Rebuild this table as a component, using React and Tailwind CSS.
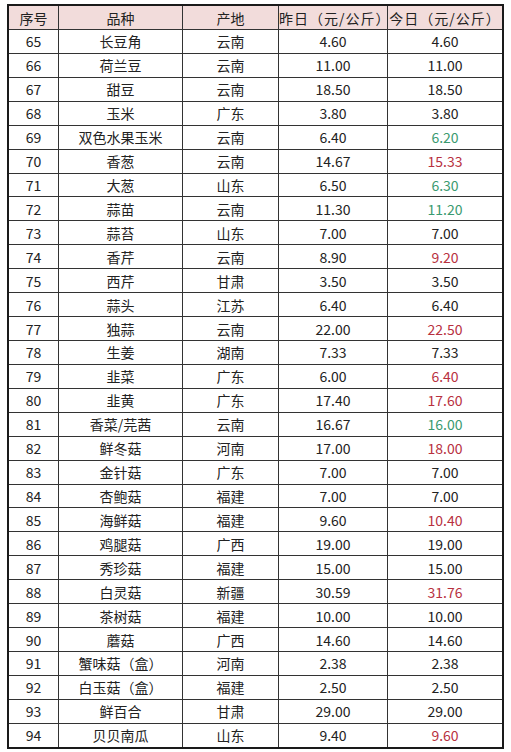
import React from "react";

const rows = [
  [65, "长豆角", "云南", "4.60", "4.60", ""],
  [66, "荷兰豆", "云南", "11.00", "11.00", ""],
  [67, "甜豆", "云南", "18.50", "18.50", ""],
  [68, "玉米", "广东", "3.80", "3.80", ""],
  [69, "双色水果玉米", "云南", "6.40", "6.20", "g"],
  [70, "香葱", "云南", "14.67", "15.33", "r"],
  [71, "大葱", "山东", "6.50", "6.30", "g"],
  [72, "蒜苗", "云南", "11.30", "11.20", "g"],
  [73, "蒜苔", "山东", "7.00", "7.00", ""],
  [74, "香芹", "云南", "8.90", "9.20", "r"],
  [75, "西芹", "甘肃", "3.50", "3.50", ""],
  [76, "蒜头", "江苏", "6.40", "6.40", ""],
  [77, "独蒜", "云南", "22.00", "22.50", "r"],
  [78, "生姜", "湖南", "7.33", "7.33", ""],
  [79, "韭菜", "广东", "6.00", "6.40", "r"],
  [80, "韭黄", "广东", "17.40", "17.60", "r"],
  [81, "香菜/芫茜", "云南", "16.67", "16.00", "g"],
  [82, "鲜冬菇", "河南", "17.00", "18.00", "r"],
  [83, "金针菇", "广东", "7.00", "7.00", ""],
  [84, "杏鲍菇", "福建", "7.00", "7.00", ""],
  [85, "海鲜菇", "福建", "9.60", "10.40", "r"],
  [86, "鸡腿菇", "广西", "19.00", "19.00", ""],
  [87, "秀珍菇", "福建", "15.00", "15.00", ""],
  [88, "白灵菇", "新疆", "30.59", "31.76", "r"],
  [89, "茶树菇", "福建", "10.00", "10.00", ""],
  [90, "蘑菇", "广西", "14.60", "14.60", ""],
  [91, "蟹味菇（盒）", "河南", "2.38", "2.38", ""],
  [92, "白玉菇（盒）", "福建", "2.50", "2.50", ""],
  [93, "鲜百合", "甘肃", "29.00", "29.00", ""],
  [94, "贝贝南瓜", "山东", "9.40", "9.60", "r"],
];

const font = { fontFamily: '"Noto Sans CJK SC", "Noto Sans", sans-serif' };

export default function App() {
  return (
    <div className="w-[511px] h-[752px] bg-white pt-[4px] pl-[7px]" style={font}>
      <div className="w-[497px] border-2 border-[#1a1a1a]">
        <div className="grid grid-cols-[50px_124px_96px_109px_1fr] h-[23px] bg-[#f2dcdb] text-[14px] text-[#222] leading-none">
          <div className="flex items-center justify-center border-r border-[#333]">序号</div>
          <div className="flex items-center justify-center border-r border-[#333]">品种</div>
          <div className="flex items-center justify-center border-r border-[#333]">产地</div>
          <div className="flex items-center justify-center border-r border-[#333] tracking-[1px]">昨日（元/公斤）</div>
          <div className="flex items-center justify-center tracking-[1px]">今日（元/公斤）</div>
        </div>
        {rows.map((r) => (
          <div
            key={r[0]}
            className="grid grid-cols-[50px_124px_96px_109px_1fr] h-[23.93px] border-t border-[#333] text-[14px] text-[#222] leading-none"
          >
            <div className="flex items-center justify-center border-r border-[#333]">{r[0]}</div>
            <div className="flex items-center justify-center border-r border-[#333]">{r[1]}</div>
            <div className="flex items-center justify-center border-r border-[#333]">{r[2]}</div>
            <div className="flex items-center justify-center border-r border-[#333]">{r[3]}</div>
            <div
              className={
                "flex items-center justify-center " +
                (r[5] === "r" ? "text-[#b8313f]" : r[5] === "g" ? "text-[#3a9a70]" : "")
              }
            >
              {r[4]}
            </div>
          </div>
        ))}
      </div>
    </div>
  );
}
